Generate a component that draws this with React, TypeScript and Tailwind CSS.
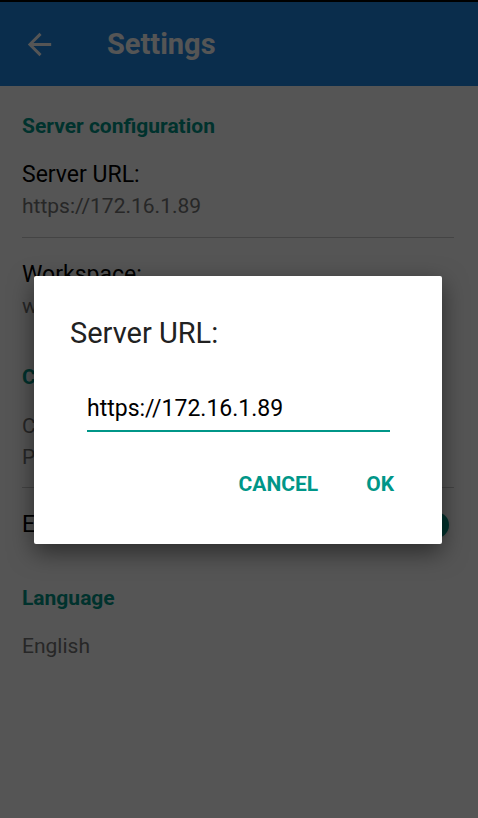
const font = { fontFamily: 'Roboto, "Noto Sans", sans-serif' };

function SectionTitle({ children, className = '' }: { children: string; className?: string }) {
  return (
    <h3 className={`text-[21px] leading-6 font-bold text-[#009688] ${className}`}>{children}</h3>
  );
}

export default function App() {
  return (
    <div className="relative w-[478px] h-[818px] overflow-hidden bg-white" style={font}>
      {/* page under the dialog */}
      <div className="h-[2px] bg-black" />
      <header className="h-[84px] bg-[#1e88e5] flex items-center">
        <svg viewBox="0 0 24 24" className="ml-[22px] w-[35px] h-[35px] fill-white">
          <path d="M20 11H7.83l5.59-5.59L12 4l-8 8 8 8 1.41-1.41L7.83 13H20v-2z" />
        </svg>
        <h1 className="ml-[50px] text-[29px] leading-none font-bold text-white">Settings</h1>
      </header>

      <div className="pl-[22px] pr-[24px]">
        <SectionTitle className="mt-[28px]">Server configuration</SectionTitle>
        <div className="mt-[24px] text-[23px] leading-[26px] text-black">Server URL:</div>
        <div className="mt-[6px] text-[21px] leading-6 text-[#757575]">https://172.16.1.89</div>
        <div className="mt-[19px] h-px bg-[#cccccc]" />

        <div className="mt-[24px] text-[23px] leading-[26px] text-black">Workspace:</div>
        <div className="mt-[6px] text-[21px] leading-6 text-[#757575]">workspace</div>

        <SectionTitle className="mt-[47px]">Credentials</SectionTitle>
        <div className="mt-[25px] text-[21px] leading-6 text-[#757575]">Client ID</div>
        <div className="mt-[7px] text-[21px] leading-6 text-[#757575]">Password</div>
        <div className="mt-[18px] h-px bg-[#cccccc]" />

        <div className="mt-[24px] flex items-center justify-between">
          <span className="text-[23px] leading-[26px] text-black">Enable notifications</span>
          <div className="relative w-[40px] h-[16px] rounded-full bg-[#80cbc4] mr-[9px]">
            <div className="absolute -right-[4px] -top-[5px] w-[26px] h-[26px] rounded-full bg-[#009688] shadow" />
          </div>
        </div>

        <SectionTitle className="mt-[48px]">Language</SectionTitle>
        <div className="mt-[24px] text-[21px] leading-6 text-[#757575]">English</div>
      </div>

      {/* scrim */}
      <div className="absolute inset-0 bg-black/[0.667]" />

      {/* dialog */}
      <div className="absolute left-[34px] top-[276px] w-[408px] h-[268px] bg-white rounded-[2px] shadow-[0_8px_24px_rgba(0,0,0,0.5)] flex flex-col">
        <div className="mt-[42px] ml-[36px] text-[29px] leading-[30px] text-[#212121]">Server URL:</div>
        <div className="mt-[48px] ml-[53px] mr-[52px] flex flex-col">
          <span className="text-[23px] leading-[26px] text-black">https://172.16.1.89</span>
          <div className="mt-[8px] h-[2px] bg-[#009688]" />
        </div>
        <div className="mt-[40px] flex justify-end pr-[48px] gap-[48px]">
          <button className="text-[21px] leading-6 font-bold text-[#009688]">CANCEL</button>
          <button className="text-[21px] leading-6 font-bold text-[#009688]">OK</button>
        </div>
      </div>
    </div>
  );
}
